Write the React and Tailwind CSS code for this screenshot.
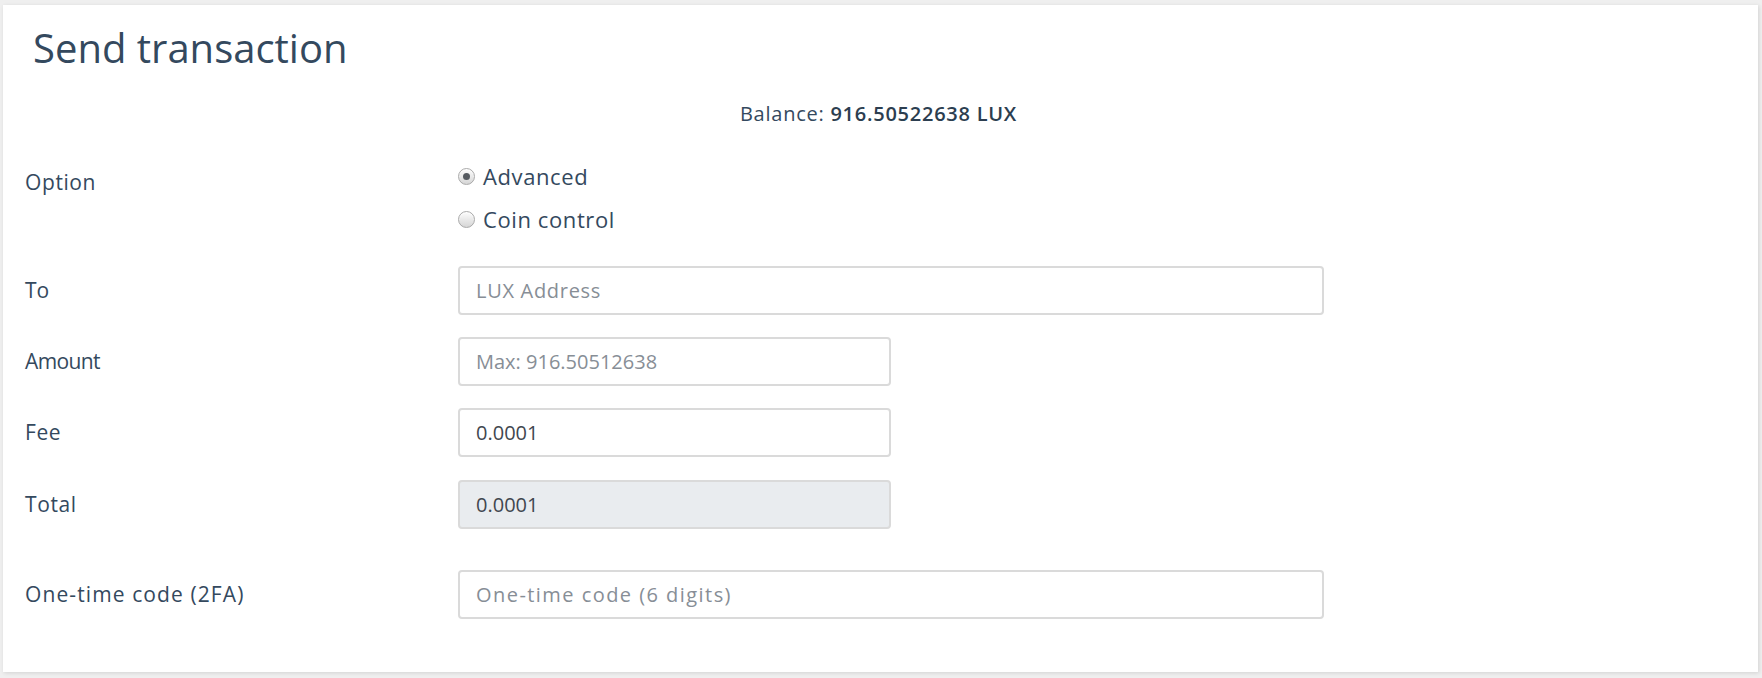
import React from 'react';

const Radio = ({ checked, label }) => (
  <label className="flex items-center h-[30px] text-[22px] tracking-[0.6px] text-[#34495e]">
    <span className="w-[17px] h-[17px] rounded-full border border-[#a9a9a9] bg-gradient-to-b from-[#fdfdfd] to-[#d6d6d6] flex items-center justify-center shadow-[inset_0_1px_1px_rgba(255,255,255,0.8)]">
      {checked && <span className="w-[7px] h-[7px] rounded-full bg-[#555a60]"></span>}
    </span>
    <span className="ml-[8px]">{label}</span>
  </label>
);

const Field = ({ label, labelTrack = 'tracking-[0.6px]', placeholder, phTrack = '', value, disabled, width, className = '' }) => (
  <div className={`flex items-center ${className}`}>
    <div className={`w-[433px] text-[21px] text-[#34495e] ${labelTrack}`}>{label}</div>
    <div
      className={`${width} h-[49px] rounded-[4px] border-2 border-[#dadada] px-[16px] flex items-center text-[20px] ${
        disabled ? 'bg-[#e9ecef]' : 'bg-white'
      }`}
    >
      {value ? (
        <span className="text-[#41474f]">{value}</span>
      ) : (
        <span className={`text-[#878e96] ${phTrack}`}>{placeholder}</span>
      )}
    </div>
  </div>
);

const App = () => {
  return (
    <div className="bg-[#efefef] w-[1762px] h-[678px] pt-[5px] pl-[3px] pr-[4px] font-['Open_Sans',sans-serif]">
      <div className="bg-white h-[667px] px-[22px] shadow-[1px_1px_4px_rgba(0,0,0,0.12)]">
        <h2 className="pt-[19px] pl-[8px] text-[40px] leading-[48px] font-normal text-[#34495e]">Send transaction</h2>

        <div className="mt-[27px] text-center text-[20px] leading-[30px] tracking-[0.75px] text-[#34495e] pr-[4px]">
          Balance: <span className="font-semibold text-[#2c3e50]">916.50522638 LUX</span>
        </div>

        <div className="mt-[32px] flex">
          <div className="w-[433px] mt-[6px] text-[21px] leading-[30px] tracking-[0.6px] text-[#34495e]">Option</div>
          <div className="flex flex-col gap-[13px]">
            <Radio checked label="Advanced" />
            <Radio label="Coin control" />
          </div>
        </div>

        <Field className="mt-[32px]" label="To" labelTrack="" placeholder="LUX Address" phTrack="tracking-[0.7px]" width="w-[866px]" />
        <Field className="mt-[22px]" label="Amount" labelTrack="tracking-[-0.6px]" placeholder="Max: 916.50512638" width="w-[433px]" />
        <Field className="mt-[22px]" label="Fee" value="0.0001" width="w-[433px]" />
        <Field className="mt-[23px]" label="Total" value="0.0001" disabled width="w-[433px]" />
        <Field
          className="mt-[41px]"
          label="One-time code (2FA)"
          labelTrack="tracking-[1.1px]"
          placeholder="One-time code (6 digits)"
          phTrack="tracking-[1.45px]"
          width="w-[866px]"
        />
      </div>
    </div>
  );
};

export default App;
